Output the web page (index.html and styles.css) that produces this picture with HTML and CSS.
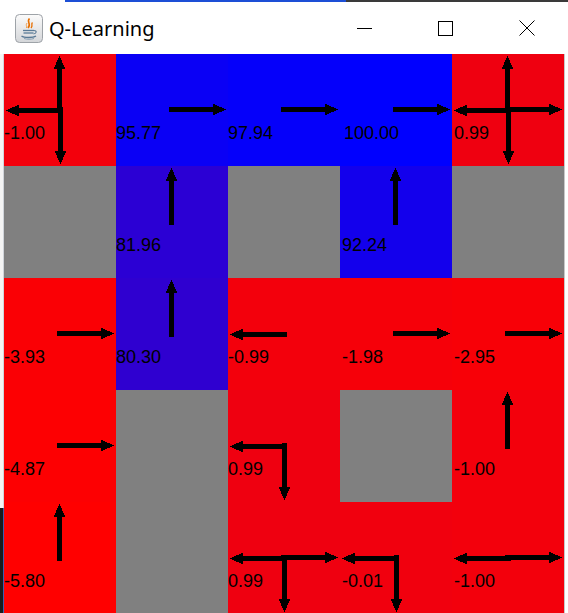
FILE: index.html
```html
<!DOCTYPE html>
<html>
<head>
<meta charset="utf-8">
<title>Q-Learning</title>
<link rel="stylesheet" href="styles.css">
</head>
<body>
<svg class="defs" width="0" height="0" aria-hidden="true">
  <defs>
    <g id="ar">
      <rect x="53" y="53" width="47" height="5"/>
      <polygon points="97,49.5 110,55.5 97,61.5"/>
    </g>
  </defs>
</svg>
<div class="window">
  <div class="strip"><span class="s1"></span><span class="s2"></span><span class="s3"></span></div>
  <div class="titlebar">
    <svg class="appicon" width="28" height="29" viewBox="0 0 28 29">
      <defs>
        <linearGradient id="ig" x1="0" y1="0" x2="0" y2="1">
          <stop offset="0" stop-color="#fbfbfb"/>
          <stop offset="1" stop-color="#d4d6d9"/>
        </linearGradient>
      </defs>
      <rect x="0.5" y="0.5" width="27" height="28" rx="4" fill="url(#ig)" stroke="#9ea3a8"/>
      <path d="M14.5 4.5 C11 8 17 9.5 13 14" fill="none" stroke="#e76f00" stroke-width="1.6"/>
      <path d="M17.5 8.5 C15.5 10.5 18.5 11 16 14" fill="none" stroke="#e76f00" stroke-width="1.3"/>
      <path d="M12 9 C10.5 11 12 12 11.5 14" fill="none" stroke="#f0a050" stroke-width="1"/>
      <path d="M8 16.5 H19" stroke="#5a7a96" stroke-width="1.3"/>
      <path d="M8.5 19 H18.5" stroke="#5a7a96" stroke-width="1.3"/>
      <path d="M19 16.5 C22 16.5 22 19.5 18.5 20" fill="none" stroke="#5a7a96" stroke-width="1.1"/>
      <path d="M6.5 22 C9 24 18 24 21 22" fill="none" stroke="#5a7a96" stroke-width="1.3"/>
      <path d="M9 24.5 C12 25.5 16 25.5 19 24.5" fill="none" stroke="#8aa0b4" stroke-width="1"/>
    </svg>
    <span class="title">Q-Learning</span>
    <div class="controls">
      <div class="btn"><span class="min"></span></div>
      <div class="btn"><span class="max"></span></div>
      <div class="btn">
        <svg width="16" height="16" viewBox="0 0 16 16"><path d="M0.5 0.5 L15.5 15.5 M15.5 0.5 L0.5 15.5" stroke="#000" stroke-width="1"/></svg>
      </div>
    </div>
  </div>
  <div class="main">
    <div class="frame-l"><div class="fl-top"></div><div class="fl-bot"></div></div>
    <div class="grid">
      <!-- row 1 -->
      <div class="cell" style="background:#f3000c">
        <svg class="arrows" viewBox="0 0 112 112"><use href="#ar" transform="rotate(-90 56 56)"/><use href="#ar" transform="rotate(90 56 56)"/><use href="#ar" transform="rotate(180 56 56)"/></svg>
        <span class="q">-1.00</span>
      </div>
      <div class="cell" style="background:#0a00f5">
        <svg class="arrows" viewBox="0 0 112 112"><use href="#ar"/></svg>
        <span class="q">95.77</span>
      </div>
      <div class="cell" style="background:#0500fa">
        <svg class="arrows" viewBox="0 0 112 112"><use href="#ar"/></svg>
        <span class="q">97.94</span>
      </div>
      <div class="cell" style="background:#0000ff">
        <svg class="arrows" viewBox="0 0 112 112"><use href="#ar"/></svg>
        <span class="q wide">100.00</span>
      </div>
      <div class="cell" style="background:#ef0010">
        <svg class="arrows" viewBox="0 0 112 112"><use href="#ar" transform="rotate(-90 56 56)"/><use href="#ar" transform="rotate(90 56 56)"/><use href="#ar" transform="rotate(180 56 56)"/><use href="#ar"/></svg>
        <span class="q">0.99</span>
      </div>
      <!-- row 2 -->
      <div class="cell wall"></div>
      <div class="cell" style="background:#2b00d4">
        <svg class="arrows" viewBox="0 0 112 112"><use href="#ar" transform="rotate(-90 56 56)"/></svg>
        <span class="q">81.96</span>
      </div>
      <div class="cell wall"></div>
      <div class="cell" style="background:#1300ec">
        <svg class="arrows" viewBox="0 0 112 112"><use href="#ar" transform="rotate(-90 56 56)"/></svg>
        <span class="q">92.24</span>
      </div>
      <div class="cell wall"></div>
      <!-- row 3 -->
      <div class="cell" style="background:#fa0005">
        <svg class="arrows" viewBox="0 0 112 112"><use href="#ar"/></svg>
        <span class="q">-3.93</span>
      </div>
      <div class="cell" style="background:#2f00d0">
        <svg class="arrows" viewBox="0 0 112 112"><use href="#ar" transform="rotate(-90 56 56)"/></svg>
        <span class="q">80.30</span>
      </div>
      <div class="cell" style="background:#f3000c">
        <svg class="arrows" viewBox="0 0 112 112"><use href="#ar" transform="rotate(180 56 56)"/></svg>
        <span class="q">-0.99</span>
      </div>
      <div class="cell" style="background:#f60009">
        <svg class="arrows" viewBox="0 0 112 112"><use href="#ar"/></svg>
        <span class="q">-1.98</span>
      </div>
      <div class="cell" style="background:#f80007">
        <svg class="arrows" viewBox="0 0 112 112"><use href="#ar"/></svg>
        <span class="q">-2.95</span>
      </div>
      <!-- row 4 -->
      <div class="cell" style="background:#fd0002">
        <svg class="arrows" viewBox="0 0 112 112"><use href="#ar"/></svg>
        <span class="q">-4.87</span>
      </div>
      <div class="cell wall"></div>
      <div class="cell" style="background:#ef0010">
        <svg class="arrows" viewBox="0 0 112 112"><use href="#ar" transform="rotate(180 56 56)"/><use href="#ar" transform="rotate(90 56 56)"/></svg>
        <span class="q">0.99</span>
      </div>
      <div class="cell wall"></div>
      <div class="cell" style="background:#f3000c">
        <svg class="arrows" viewBox="0 0 112 112"><use href="#ar" transform="rotate(-90 56 56)"/></svg>
        <span class="q">-1.00</span>
      </div>
      <!-- row 5 -->
      <div class="cell" style="background:#ff0000">
        <svg class="arrows" viewBox="0 0 112 112"><use href="#ar" transform="rotate(-90 56 56)"/></svg>
        <span class="q">-5.80</span>
      </div>
      <div class="cell wall"></div>
      <div class="cell" style="background:#ef0010">
        <svg class="arrows" viewBox="0 0 112 112"><use href="#ar" transform="rotate(180 56 56)"/><use href="#ar"/><use href="#ar" transform="rotate(90 56 56)"/></svg>
        <span class="q">0.99</span>
      </div>
      <div class="cell" style="background:#f1000e">
        <svg class="arrows" viewBox="0 0 112 112"><use href="#ar" transform="rotate(180 56 56)"/><use href="#ar" transform="rotate(90 56 56)"/></svg>
        <span class="q">-0.01</span>
      </div>
      <div class="cell" style="background:#f3000c">
        <svg class="arrows" viewBox="0 0 112 112"><use href="#ar" transform="rotate(180 56 56)"/><use href="#ar"/></svg>
        <span class="q">-1.00</span>
      </div>
    </div>
    <div class="frame-r"></div>
  </div>
</div>
</body>
</html>
```
FILE: styles.css
```css
html, body {
  margin: 0;
  padding: 0;
  background: #ffffff;
}
body {
  width: 568px;
  height: 613px;
  overflow: hidden;
}
.defs {
  display: block;
  width: 0;
  height: 0;
  overflow: hidden;
}
.window {
  width: 568px;
  height: 613px;
  display: flex;
  flex-direction: column;
  overflow: hidden;
  background: #ffffff;
}
.strip {
  display: flex;
  height: 2px;
  flex: none;
}
.strip .s1 { width: 65px; background: #ffffff; }
.strip .s2 { width: 281px; background: #1d4fd6; }
.strip .s3 { flex: 1; background: #3a3a3a; }

.titlebar {
  height: 52px;
  flex: none;
  display: flex;
  align-items: center;
  background: #ffffff;
}
.appicon {
  margin-left: 15px;
  flex: none;
}
.title {
  margin-left: 6px;
  font-family: "Noto Sans", "Open Sans", sans-serif;
  font-size: 20px;
  color: #000000;
  white-space: nowrap;
}
.controls {
  margin-left: auto;
  margin-right: 1px;
  display: flex;
  height: 52px;
}
.btn {
  width: 81px;
  height: 52px;
  display: flex;
  align-items: center;
  justify-content: center;
}
.btn .min {
  display: block;
  width: 15px;
  height: 1px;
  background: #000000;
}
.btn .max {
  display: block;
  width: 13px;
  height: 13px;
  border: 1px solid #000000;
}

.main {
  display: flex;
  flex: none;
  height: 560px;
}
.frame-l {
  width: 4px;
  flex: none;
  display: flex;
  flex-direction: column;
}
.fl-top {
  height: 454px;
  background: #f4f4f4;
  border-right: 1px solid #d0d4da;
}
.fl-bot {
  flex: 1;
  background: #1b1b1b;
  border-right: 1px solid #3b5fb0;
}
.grid {
  display: grid;
  grid-template-columns: repeat(5, 112px);
  grid-template-rows: repeat(5, 112px);
  flex: none;
}
.frame-r {
  width: 4px;
  flex: none;
  background: #ffffff;
  border-left: 1px solid #c8c8c8;
}
.cell {
  display: grid;
  width: 112px;
  height: 112px;
  overflow: hidden;
}
.cell > * {
  grid-area: 1 / 1;
}
.cell.wall {
  background: #808080;
}
.arrows {
  width: 112px;
  height: 112px;
  display: block;
  fill: #000000;
  shape-rendering: crispEdges;
}
.q {
  align-self: start;
  justify-self: start;
  padding-top: 70px;
  font-family: "Liberation Sans", Arial, sans-serif;
  font-size: 18px;
  line-height: 18px;
  color: #000000;
  white-space: nowrap;
}
.cell:nth-child(5n+4) .q,
.cell:nth-child(5n) .q {
  padding-left: 2px;
}
.cell .q.wide {
  padding-left: 4px;
}
```
